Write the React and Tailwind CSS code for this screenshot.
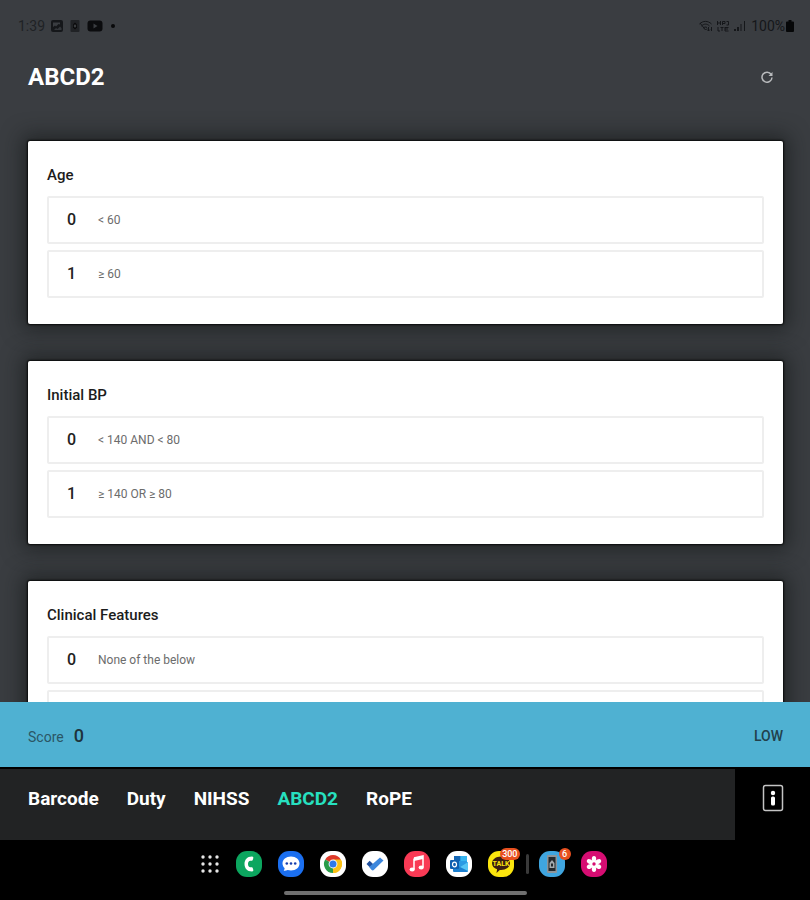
import React, { useState } from "react";

const QUESTIONS = [
  {
    title: "Age",
    options: [
      { score: 0, label: "< 60" },
      { score: 1, label: "≥ 60" },
    ],
  },
  {
    title: "Initial BP",
    options: [
      { score: 0, label: "< 140 AND < 80" },
      { score: 1, label: "≥ 140 OR ≥ 80" },
    ],
  },
  {
    title: "Clinical Features",
    options: [
      { score: 0, label: "None of the below" },
      { score: 1, label: "" },
    ],
  },
];

const TABS = ["Barcode", "Duty", "NIHSS", "ABCD2", "RoPE"];

function StatusBar() {
  return (
    <div className="flex items-center justify-between pl-[18px] pr-4 pt-4 text-[#15171a]">
      <div className="flex items-center gap-[6px]">
        <span className="text-sm leading-5 text-[#1f2225]">1:39</span>
        <svg className="w-3 h-3" viewBox="0 0 12 12">
          <rect width="12" height="12" rx="2" fill="currentColor" />
          <path d="M2 2.5h7v2L7.500 4 5 6.500 4 5.500 2 7z" fill="#3a3d41" />
          <path d="M3 10l2-2 1.500 1L9 6.500l1.500 1.500v2z" fill="#33363a" />
        </svg>
        <svg className="w-3 h-3" viewBox="0 0 12 12">
          <rect x="1.500" width="9" height="12" rx="1" fill="currentColor" opacity=".7" />
          <path d="M4 4.500L6 2.500l2 2v3l-2 2-2-2z" fill="#08090a" />
          <path d="M6 4.500v3M4.800 6h2.400" stroke="#4a4d51" />
        </svg>
        <svg className="w-4 h-3" viewBox="0 0 16 12">
          <rect x=".5" y=".5" width="15" height="11" rx="3" fill="#0b0c0e" />
          <path d="M6.500 3.500v5l4-2.500z" fill="#3a3d41" />
        </svg>
        <svg className="w-2 h-3" viewBox="0 0 8 12">
          <circle cx="4" cy="6" r="2" fill="#08090a" />
        </svg>
      </div>
      <div className="flex items-center gap-1">
        <svg className="w-[14px] h-3" viewBox="0 0 14 12" fill="none" stroke="currentColor">
          <path d="M.5 4C4 .5 9 .5 12.500 4M2.500 6c2.500-2.500 5.500-2.500 8 0M4.500 8c1-1 2-1.300 3.500-.5" />
          <path d="M1 3l5.500 7L8 8.500M9.500 7v4M8 9.500L9.500 11 11 9.500M12.500 11V7" />
        </svg>
        <svg className="w-3 h-3" viewBox="0 0 12 12" fill="none" stroke="currentColor">
          <path d="M.5 1v4M.5 3h3M3.500 1v4M5.500 5V1.500H8v2H5.500M9.500 1.500h2v3.500h-2M1 7v4h2M5 7v4M3.500 7.500h3M8 7.500h3.500M8 9h3M8 11h3.500M8 7v4" />
        </svg>
        <svg className="w-[14px] h-3" viewBox="0 0 14 12" fill="currentColor">
          <path d="M1 9h2v2H1zM4 7h2v4H4zM7.500 4h1v7h-1zM11 1h1v10h-1z" />
        </svg>
        <span className="text-sm leading-5">100%</span>
        <svg className="-ml-[3px] w-2 h-3" viewBox="0 0 8 12">
          <path d="M2.500 0h3v1.500H7A1 1 0 0 1 8 2.500V11a1 1 0 0 1-1 1H1a1 1 0 0 1-1-1V2.500a1 1 0 0 1 1-1h1.500z" fill="#060708" />
        </svg>
      </div>
    </div>
  );
}

function QuestionCard({ question, selected, onSelect }) {
  return (
    <section className="shrink-0 rounded-xs bg-white px-[19px] pt-6 pb-[26px] shadow-[0_0_2px_1px_rgba(0,0,0,0.8),0_0_20px_6px_rgba(20,24,24,0.6)]">
      <h2 className="mb-[11px] text-[15px] leading-5 font-medium text-[#1c1c1c]">{question.title}</h2>
      <div className="flex flex-col gap-[6px]">
        {question.options.map((o) => (
          <button
            key={o.score}
            type="button"
            aria-pressed={selected === o.score}
            onClick={() => onSelect(o.score)}
            className={`flex h-12 w-full items-center rounded-xs border-2 pl-[18px] text-left ${
              selected === o.score ? "border-[#4fb1d2]" : "border-[#eeeeee]"
            }`}
          >
            {o.label && (
              <>
                <span className="w-[31px] text-base font-medium text-[#222222]">{o.score}</span>
                <span className="text-xs text-[#6c6c6c]">{o.label}</span>
              </>
            )}
          </button>
        ))}
      </div>
    </section>
  );
}

/* Round launcher tile used for each app in the dock */
function DockApp({ name, bg, badge, children }) {
  return (
    <button type="button" aria-label={name} className="relative h-[26px] w-[26px]">
      <svg className="h-full w-full" viewBox="0 0 26 26">
        <rect width="26" height="26" rx="11" fill={bg} />
        {children}
      </svg>
      {badge && (
        <span className="absolute -top-[3px] -right-[6px] min-w-3 rounded-full bg-[#e8501f] px-[2px] text-center text-[9px] leading-3 font-medium text-white">
          {badge}
        </span>
      )}
    </button>
  );
}

function Dock() {
  return (
    <div className="flex flex-col items-center bg-black pt-[11px] pb-[5px]">
      <div className="flex items-center gap-4 pr-1">
        <button type="button" aria-label="All apps" className="h-5 w-5">
          <svg viewBox="0 0 20 20" fill="#e6e6e6">
            {[3, 10, 17].map((y) =>
              [3, 10, 17].map((x) => <circle key={`${x}-${y}`} cx={x} cy={y} r="1.700" />)
            )}
          </svg>
        </button>
        <DockApp name="Phone" bg="#0ca65f">
          <path d="M16 5.500c-5 0-7.500 3.500-7.500 7.500s2.500 7.500 7.500 7.500c1.300 0 1.500-.8 1.200-2l-.4-1.300c-.3-1-.8-1.200-1.800-1-2 .4-3-1-3-3.200s1-3.600 3-3.200c1 .2 1.500 0 1.800-1l.4-1.300c.3-1.200.1-2-1.200-2z" fill="#fff" />
        </DockApp>
        <DockApp name="Messages" bg="#1b6ff0">
          <path d="M13 5.500c5 0 8.500 3 8.500 7s-3.500 7-8.500 7c-1.200 0-2.300-.2-3.300-.5-1.200.6-2.500.9-4 .8.7-.9 1-1.800.9-2.700-1.300-1.200-2.100-2.800-2.100-4.600 0-4 3.500-7 8.500-7z" fill="#fff" />
          <g fill="#173fae">
            <circle cx="8.800" cy="12.500" r="1.300" />
            <circle cx="13" cy="12.500" r="1.300" />
            <circle cx="17.200" cy="12.500" r="1.300" />
          </g>
        </DockApp>
        <DockApp name="Chrome" bg="#fff">
          <path d="M13 13L5.200 8.500a9 9 0 0 1 15.600 0z" fill="#df3a2b" />
          <path d="M13 13l7.800-4.500A9 9 0 0 1 13 22z" fill="#fbc116" />
          <path d="M13 13v9A9 9 0 0 1 5.200 8.500z" fill="#299c48" />
          <path d="M13 8.500h7.800A9 9 0 0 1 13 22l3.900-6.700z" fill="#fbc116" />
          <circle cx="13" cy="13" r="4.400" fill="#fff" />
          <circle cx="13" cy="13" r="3.500" fill="#2f79e8" />
        </DockApp>
        <DockApp name="To Do" bg="#fff">
          <path d="M4.500 13l3.200-3.200L13 15l-3 3.500z" fill="#1f4f9e" />
          <path d="M9.500 18.800L7.200 16 18 6.500 21.500 9.500 12 18.800a1.700 1.700 0 0 1-2.500 0z" fill="#3c86dc" />
        </DockApp>
        <DockApp name="Music" bg="#f93a55">
          <path d="M10 7l9-2v11" fill="none" stroke="#fff" strokeWidth="1.500" />
          <path d="M10 18V7.500" stroke="#fff" strokeWidth="1.500" />
          <path d="M10 7l9-2v3l-9 2z" fill="#fff" />
          <ellipse cx="8.200" cy="18.500" rx="2.600" ry="2" fill="#fff" />
          <ellipse cx="17.200" cy="16.500" rx="2.600" ry="2" fill="#fff" />
        </DockApp>
        <DockApp name="Outlook" bg="#fff">
          <rect x="8" y="5" width="13" height="14" rx="1" fill="#2a9be4" />
          <path d="M8 5h6.500v5H8z" fill="#1466b4" />
          <path d="M14.500 5H21v5h-6.500z" fill="#37b5ef" />
          <path d="M7 12l7 4 8-5v9a1 1 0 0 1-1 1H8a1 1 0 0 1-1-1z" fill="#1a7fd0" />
          <path d="M22 11v9l-8-4z" fill="#55c5f5" />
          <rect x="4" y="9" width="9" height="9" rx="1" fill="#0f5fb0" />
          <ellipse cx="8.500" cy="13.500" rx="2" ry="2.300" fill="none" stroke="#fff" strokeWidth="1.200" />
        </DockApp>
        <DockApp name="KakaoTalk" bg="#fbe50e" badge="300">
          <path d="M13 5.500c5 0 9 2.900 9 6.800S18 19 13 19l-1.200-.1L8.500 22l.6-3.700C6 17.300 4 15.100 4 12.300 4 8.400 8 5.500 13 5.500z" fill="#3a1d12" />
          <text x="13" y="15" textAnchor="middle" fontSize="7" fontWeight="700" fill="#fbe50e">TALK</text>
        </DockApp>
        <span className="-mr-[6px] -ml-1 h-5 w-[3px] rounded-full bg-[#3a3a3a]" />
        <DockApp name="ID" bg="#3fa5df" badge="6">
          <rect x="8" y="4" width="10" height="18" rx="1" fill="#8d9499" />
          <rect x="9.500" y="6" width="7" height="14" fill="#23282c" />
          <path d="M10.500 17v-5l2.500-3 2.500 3v5z" fill="#a4aaae" />
          <rect x="12" y="12.500" width="2" height="3" fill="#23282c" />
        </DockApp>
        <DockApp name="Gallery" bg="#d60d72">
          <g fill="#fff">
            {[0, 60, 120, 180, 240, 300].map((a) => (
              <ellipse key={a} cx="13" cy="8" rx="2.200" ry="3" transform={`rotate(${a} 13 13)`} />
            ))}
          </g>
          <circle cx="13" cy="13" r="3.500" fill="#fff" />
          <circle cx="13" cy="13" r="1.700" fill="#d60d72" />
        </DockApp>
      </div>
      <div className="mt-[14px] h-1 w-[30%] rounded-full bg-[#6f6f6f]" />
    </div>
  );
}

export default function App() {
  const [answers, setAnswers] = useState({});
  const [tab, setTab] = useState("ABCD2");

  const total = Object.values(answers).reduce((sum, n) => sum + n, 0);

  return (
    <div className="flex h-screen flex-col overflow-hidden bg-[#3a3d41] font-['Roboto','Noto_Sans_CJK_KR',sans-serif]">
      <StatusBar />

      {/* Title */}
      <header className="flex items-center justify-between pt-[25px] pr-[37px] pb-4 pl-7">
        <h1 className="text-2xl leading-8 font-bold text-white">ABCD2</h1>
        <button type="button" aria-label="Reset" onClick={() => setAnswers({})}>
          <svg className="h-3 w-3" viewBox="0 0 12 12" fill="none" stroke="#b9bbbd" strokeWidth="1.500">
            <path d="M10.200 3.500A5 5 0 1 0 11 6.500" />
            <path d="M11.500 1v4h-4z" fill="#b9bbbd" stroke="none" />
          </svg>
        </button>
      </header>

      {/* Questions */}
      <main className="flex min-h-0 flex-1 flex-col gap-[37px] overflow-hidden pt-8 pr-[27px] pl-7">
        {QUESTIONS.map((q) => (
          <QuestionCard
            key={q.title}
            question={q}
            selected={answers[q.title]}
            onSelect={(score) => setAnswers({ ...answers, [q.title]: score })}
          />
        ))}
      </main>

      {/* Score */}
      <div className="flex h-[65px] shrink-0 items-center justify-between bg-[#4fb1d2] pt-[2px] pr-[27px] pl-7">
        <p className="flex items-baseline gap-[10px] text-[#2b5665]">
          <span className="text-sm">Score</span>
          <span className="text-lg font-medium text-[#1e333b]">{total}</span>
        </p>
        <span className="text-sm font-medium text-[#22404b]">{total > 5 ? "HIGH" : total > 3 ? "MODERATE" : "LOW"}</span>
      </div>

      {/* Tabs */}
      <div className="flex h-[73px] shrink-0 border-t-2 border-black bg-black">
        <nav className="flex flex-1 items-start gap-7 bg-[#222324] pt-4 pl-7">
          {TABS.map((t) => (
            <button
              key={t}
              type="button"
              onClick={() => setTab(t)}
              className={`text-[19px] leading-7 font-bold ${t === tab ? "text-[#27e0c0]" : "text-white"}`}
            >
              {t}
            </button>
          ))}
        </nav>
        <div className="flex w-[75px] items-start justify-center pt-[15px]">
          <button type="button" aria-label="Info">
            <svg className="h-7 w-[22px]" viewBox="0 0 22 28">
              <rect x="1.500" y="1.500" width="19" height="25" rx="2" fill="none" stroke="#c4c4c4" strokeWidth="1.500" />
              <circle cx="11" cy="9" r="2.200" fill="#fff" />
              <rect x="9" y="12.500" width="4" height="9" rx="1.500" fill="#fff" />
            </svg>
          </button>
        </div>
      </div>

      <Dock />
    </div>
  );
}
